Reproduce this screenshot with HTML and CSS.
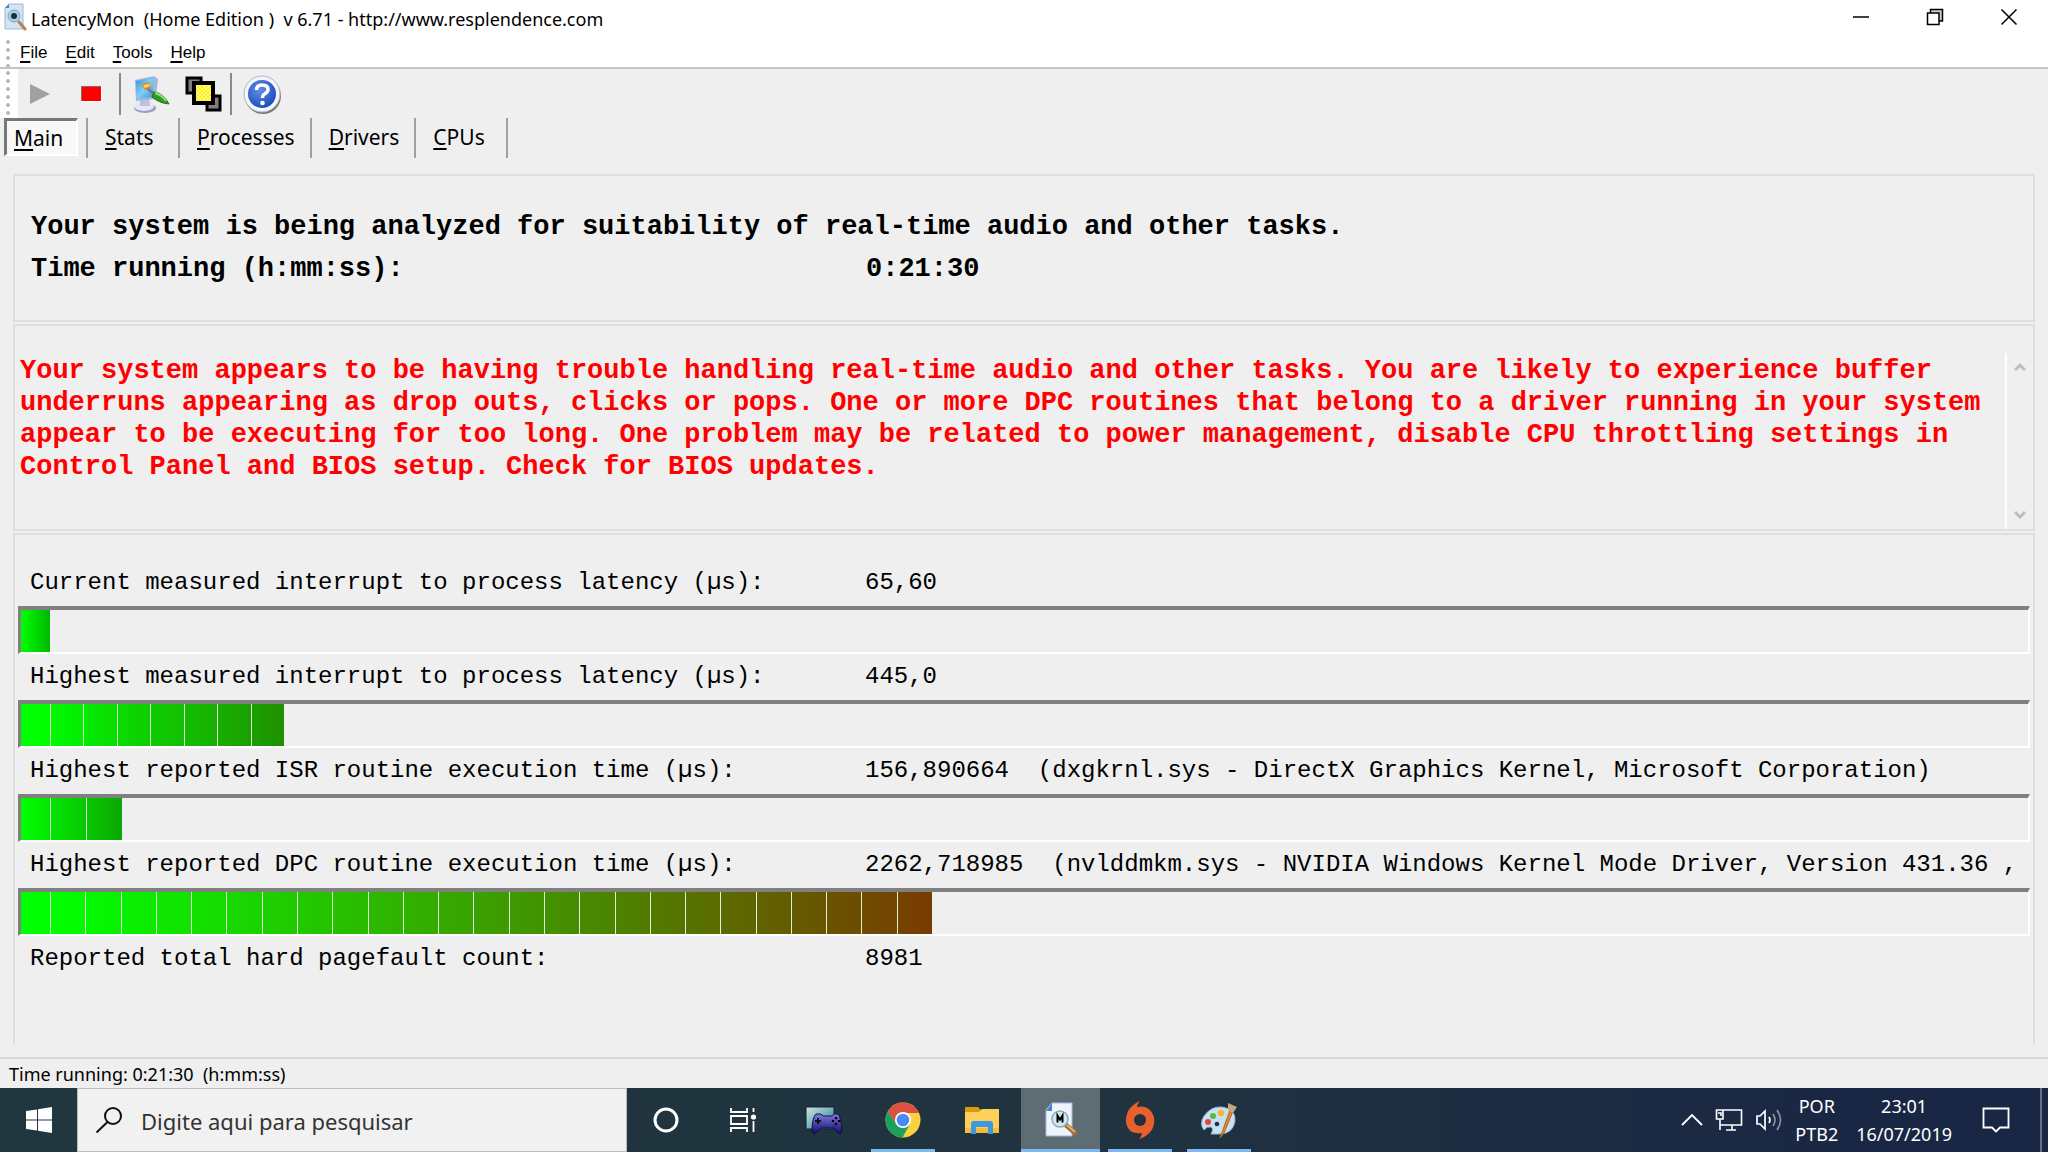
FILE: index.html
```html
<!DOCTYPE html>
<html lang="en">
<head>
<meta charset="utf-8">
<title>LatencyMon</title>
<link rel="stylesheet" href="styles.css">
</head>
<body>
<div class="window">
  <header class="titlebar">
    <svg class="app-icon" viewBox="0 0 24 30" width="24" height="30">
      <path d="M6 2H20V27H2V6Z" fill="#d3e4f6" stroke="#9db8d6"/>
      <path d="M2 6L6 2V6Z" fill="#4b86c4"/>
      <circle cx="11" cy="14" r="6" fill="#a8cfe6" stroke="#8ba5b8"/>
      <circle cx="11" cy="14" r="3" fill="#14303c"/>
      <path d="M16 20L22 27" stroke="#b98255" stroke-width="3" stroke-linecap="round"/>
    </svg>
    <h1 class="title">LatencyMon&nbsp; (Home Edition )&nbsp; v 6.71 - http://www.resplendence.com</h1>
    <div class="window-buttons">
      <button class="window-button" aria-label="Minimize"><svg viewBox="0 0 18 18" width="18" height="18"><path d="M1 9H17" stroke="#000" stroke-width="1.5"/></svg></button>
      <button class="window-button" aria-label="Restore"><svg viewBox="0 0 18 18" width="18" height="18"><path d="M4.5 1.5H16.500V13H4.500Z" fill="#ccc" stroke="#000" stroke-width="1.5"/><path d="M1.500 5H13V16.500H1.500Z" fill="#fff" stroke="#000" stroke-width="1.5"/></svg></button>
      <button class="window-button" aria-label="Close"><svg viewBox="0 0 18 18" width="18" height="18"><path d="M1.500 1.500L16.500 16.500M16.500 1.500L1.500 16.500" stroke="#000" stroke-width="1.5"/></svg></button>
    </div>
  </header>

  <nav class="menubar" aria-label="Menu">
    <span class="grip"></span>
    <button class="menu"><u>F</u>ile</button>
    <button class="menu"><u>E</u>dit</button>
    <button class="menu"><u>T</u>ools</button>
    <button class="menu"><u>H</u>elp</button>
  </nav>

  <div class="toolbar" role="toolbar">
    <span class="grip"></span>
    <button class="tool" aria-label="Start" disabled><svg viewBox="0 0 40 40" width="40" height="40"><path d="M10 10V30L30 20Z" fill="#a0a0a0"/></svg></button>
    <button class="tool" aria-label="Stop"><svg viewBox="0 0 40 40" width="40" height="40"><path d="M10 13H30V28H10Z" fill="#fff"/><path d="M9 12H29V27H9Z" fill="#8c6b6b"/><path d="M10 13H29V27H10Z" fill="#f00"/></svg></button>
    <span class="divider"></span>
    <button class="tool" aria-label="Options">
      <svg viewBox="0 0 40 40" width="40" height="40">
        <defs><linearGradient id="screen" x1="0" y1="0" x2="1" y2="1"><stop offset="0" stop-color="#2d8fe0"/><stop offset=".5" stop-color="#7fd0fa"/><stop offset="1" stop-color="#3b90d8"/></linearGradient></defs>
        <ellipse cx="14" cy="34" rx="11" ry="5" fill="#9c9cc0"/>
        <ellipse cx="13" cy="32" rx="10" ry="5" fill="#e6e6f8"/>
        <path d="M9 25L18 24L19 32H9Z" fill="#c0c0e0"/>
        <path d="M4 6L23 2L27 5L25 25L5 27Z" fill="#9db8da"/>
        <path d="M5 7L22 4L22 23L6 25Z" fill="url(#screen)"/>
        <path d="M10 10L18 8L20 14L14 16Z" fill="#d98c1c"/><path d="M12 11L18 10L19 12L14 14Z" fill="#ffd27c"/>
        <path d="M17 14L27 20L25 23L16 16Z" fill="#6b7f8f"/>
        <path d="M23 18Q32 19 38 30Q28 29 21 23Z" fill="#2f9a25" stroke="#1f6f1a"/><path d="M24 19Q31 21 35 27" stroke="#8ee06f" stroke-width="2" fill="none"/>
      </svg>
    </button>
    <button class="tool" aria-label="Windows">
      <svg viewBox="0 0 40 40" width="40" height="40">
        <defs><pattern id="dither" width="4" height="4" patternUnits="userSpaceOnUse"><path d="M0 0H4V4H0Z" fill="#fff200"/><path d="M0 0H2V2H0ZM2 2H4V4H2Z" fill="#fff799"/></pattern></defs>
        <path d="M4 4H18V19H4Z" fill="#808080" stroke="#000" stroke-width="3"/>
        <path d="M24 22H37V36H24Z" fill="#808080" stroke="#000" stroke-width="3"/>
        <path d="M11 9H30V29H11Z" fill="url(#dither)" stroke="#000" stroke-width="4"/>
      </svg>
    </button>
    <span class="divider"></span>
    <button class="tool" aria-label="Help topics">
      <svg viewBox="0 0 40 40" width="40" height="40">
        <defs><radialGradient id="help" cx=".4" cy=".35" r=".7"><stop offset="0" stop-color="#5f8fe8"/><stop offset="1" stop-color="#1d49b8"/></radialGradient></defs>
        <circle cx="21" cy="22" r="18" fill="#777"/><circle cx="20" cy="20" r="18" fill="#f4f6fb" stroke="#aab4c8"/>
        <circle cx="20" cy="20" r="14" fill="url(#help)"/>
        <path d="M14.500 16Q14.500 11 20 11Q26 11 26 15.500Q26 18 22.500 20Q20.500 21 20.500 24" fill="none" stroke="#fff" stroke-width="3.500"/>
        <circle cx="20.500" cy="29" r="2.300" fill="#fff"/>
      </svg>
    </button>
  </div>

  <nav class="tabs" role="tablist">
    <button class="tab tab-active" role="tab" aria-selected="true"><u>M</u>ain</button>
    <span class="tab-edge"></span>
    <button class="tab" role="tab"><u>S</u>tats</button>
    <button class="tab" role="tab"><u>P</u>rocesses</button>
    <button class="tab" role="tab"><u>D</u>rivers</button>
    <button class="tab" role="tab"><u>C</u>PUs</button>
  </nav>

  <main class="panels">
    <section class="panel summary">
      <p>Your system is being analyzed for suitability of real-time audio and other tasks.</p>
      <p class="pair"><span>Time running (h:mm:ss):</span><span>0:21:30</span></p>
    </section>

    <section class="panel report">
      <textarea class="report-text" readonly aria-label="Conclusion">Your system appears to be having trouble handling real-time audio and other tasks. You are likely to experience buffer underruns appearing as drop outs, clicks or pops. One or more DPC routines that belong to a driver running in your system appear to be executing for too long. One problem may be related to power management, disable CPU throttling settings in Control Panel and BIOS setup. Check for BIOS updates.</textarea>
      <div class="scrollbar">
        <button class="scroll-button" aria-label="Scroll up"><svg viewBox="0 0 12 10" width="12" height="10"><path d="M1 8L6 3L11 8" fill="none" stroke="#bdbdbd" stroke-width="3"/></svg></button>
        <button class="scroll-button" aria-label="Scroll down"><svg viewBox="0 0 12 10" width="12" height="10"><path d="M1 2L6 7L11 2" fill="none" stroke="#bdbdbd" stroke-width="3"/></svg></button>
      </div>
    </section>

    <section class="panel measures">
      <p class="pair measure"><span>Current measured interrupt to process latency (µs):</span><span>65,60</span></p>
      <div class="bar"><div class="fill fill-current" style="width:1.45%"><i></i></div></div>
      <p class="pair measure"><span>Highest measured interrupt to process latency (µs):</span><span>445,0</span></p>
      <div class="bar"><div class="fill fill-highest" style="width:13.1%"><i></i><i></i><i></i><i></i><i></i><i></i><i></i><i></i></div></div>
      <p class="pair measure"><span>Highest reported ISR routine execution time (µs):</span><span>156,890664&nbsp; (dxgkrnl.sys - DirectX Graphics Kernel, Microsoft Corporation)</span></p>
      <div class="bar"><div class="fill fill-isr" style="width:5.05%"><i></i><i></i><i></i></div></div>
      <p class="pair measure"><span>Highest reported DPC routine execution time (µs):</span><span>2262,718985&nbsp; (nvlddmkm.sys - NVIDIA Windows Kernel Mode Driver, Version 431.36 ,</span></p>
      <div class="bar"><div class="fill fill-dpc" style="width:45.4%"><i></i><i></i><i></i><i></i><i></i><i></i><i></i><i></i><i></i><i></i><i></i><i></i><i></i><i></i><i></i><i></i><i></i><i></i><i></i><i></i><i></i><i></i><i></i><i></i><i></i><i></i></div></div>
      <p class="pair measure"><span>Reported total hard pagefault count:</span><span>8981</span></p>
    </section>
  </main>

  <footer class="statusbar">Time running: 0:21:30&nbsp; (h:mm:ss)</footer>
</div>

<div class="taskbar">
  <button class="start" aria-label="Start menu"><svg viewBox="0 0 28 28" width="28" height="28"><path d="M1 5L12 3.500V13.500H1ZM13 3.300L27 1V13.500H13ZM1 14.500H12V24.500L1 23ZM13 14.500H27V27L13 24.700Z" fill="#fff"/></svg></button>
  <label class="search">
    <svg viewBox="0 0 28 28" width="28" height="28"><circle cx="18" cy="10" r="8" fill="none" stroke="#111" stroke-width="2"/><path d="M12.500 16L1.500 26.500" stroke="#111" stroke-width="2"/></svg>
    <input class="search-input" type="text" placeholder="Digite aqui para pesquisar" aria-label="Search">
  </label>
  <div class="shell-buttons">
    <button class="shell" aria-label="Cortana"><svg viewBox="0 0 28 28" width="28" height="28"><circle cx="14" cy="14" r="11" fill="none" stroke="#fff" stroke-width="3"/></svg></button>
    <button class="shell" aria-label="Task view"><svg viewBox="0 0 28 28" width="28" height="28"><path d="M2 2V6H18V2M2 26V22H18V26M2 10H18V18H2ZM24.500 2V6M24.500 15V26" fill="none" stroke="#fff" stroke-width="1.800"/><circle cx="24.500" cy="11" r="2.600" fill="#fff"/></svg></button>
  </div>
  <div class="apps">
    <button class="app" aria-label="Game controller">
      <svg viewBox="0 0 40 40" width="40" height="40">
        <defs><linearGradient id="tv" x1="0" y1="0" x2="1" y2="1"><stop offset="0" stop-color="#d5e4e4"/><stop offset="1" stop-color="#17808a"/></linearGradient><linearGradient id="pad" x1="0" y1="0" x2="0" y2="1"><stop offset="0" stop-color="#7d7de0"/><stop offset="1" stop-color="#14056e"/></linearGradient></defs>
        <path d="M2 7H30V29H2Z" fill="url(#tv)" stroke="#123"/>
        <path d="M12 14H17L19 16H28L30 14H34Q37 17 38 31Q37 36 33 32L30 28H17L13 32Q9 36 8 31Q8 18 12 14Z" fill="url(#pad)" stroke="#10104a"/>
        <path d="M14 18V24M11 21H17" stroke="#111" stroke-width="2"/><circle cx="32" cy="18" r="1.300"/><circle cx="32" cy="24" r="1.300"/><circle cx="29" cy="21" r="1.300"/><circle cx="35" cy="21" r="1.300"/>
      </svg>
    </button>
    <button class="app app-running" aria-label="Chrome">
      <svg viewBox="0 0 36 36" width="36" height="36">
        <circle cx="18" cy="18" r="17.500" fill="#fdd03f"/>
        <path d="M3 9A17.500 17.500 0 0 1 33.200 9.500L34 11H18L11 22Z" fill="#dd4f43"/>
        <path d="M3 9A17.500 17.500 0 0 0 17.500 35.500L25 22L18 26L11 22Z" fill="#1da05f"/>
        <circle cx="18" cy="18" r="8" fill="#fff"/><circle cx="18" cy="18" r="6.300" fill="#4a8af4"/>
      </svg>
    </button>
    <button class="app" aria-label="File Explorer">
      <svg viewBox="0 0 36 36" width="36" height="36">
        <path d="M1 5H14L17 8H30V12H1Z" fill="#d99b0c"/><path d="M1 10H15L18 7H35V31H1Z" fill="#fcd05a"/><path d="M1 26H35V31H1Z" fill="#f5bb3a"/>
        <path d="M7 32V22Q7 19 10 19H26Q29 19 29 22V32H24V25H12V32Z" fill="#3b99dd"/>
      </svg>
    </button>
    <button class="app app-running app-active" aria-label="LatencyMon">
      <svg viewBox="0 0 36 36" width="36" height="36">
        <path d="M9 1H29V34H3V8Z" fill="#eef4fc" stroke="#a9b8e0"/><path d="M3 9L9 1V9Z" fill="#3f83cf"/>
        <path d="M23 23L32 31" stroke="#a06a3e" stroke-width="5" stroke-linecap="round"/><path d="M24 23L32 30" stroke="#f2b25c" stroke-width="2"/>
        <circle cx="17" cy="17" r="8" fill="#cfeaf4" stroke="#8fa9b8" stroke-width="1.500"/>
        <path d="M14.500 20.500V13.500L17 17.500L19.500 13.500V20.500" fill="none" stroke="#000" stroke-width="2"/>
      </svg>
    </button>
    <button class="app app-running" aria-label="Origin">
      <svg viewBox="0 0 40 40" width="40" height="40">
        <path d="M20 1Q17 4 17 7Q30 4 34 17Q36 30 24 37L19 39Q22 36 22 33Q8 35 6 22Q5 8 20 1Z" fill="#e9602f"/><circle cx="20" cy="20" r="6" fill="#20313d"/>
      </svg>
    </button>
    <button class="app app-running" aria-label="Paint">
      <svg viewBox="0 0 40 40" width="40" height="40">
        <path d="M23 7Q37 9 36 21Q34 34 20 34L12 34Q15 29 12 27Q8 26 5 30Q0 24 5 16Q12 6 23 7Z" fill="#c5e2f2" stroke="#8fb4cc"/>
        <circle cx="9" cy="22" r="3" fill="#e0463a"/><circle cx="14" cy="16" r="3" fill="#58b94b"/><circle cx="22" cy="13" r="3.200" fill="#f8b62a"/><circle cx="18" cy="24" r="2.300" fill="#20313d"/>
        <path d="M31 10L21 38L25 33L34 11Z" fill="#e8872b" stroke="#b8641a"/>
        <path d="M29 3L38 7L34 13L29 10Z" fill="#c6a67e"/>
      </svg>
    </button>
  </div>
  <div class="tray">
    <svg viewBox="0 0 22 14" width="22" height="14"><path d="M1 12L11 2L21 12" fill="none" stroke="#fff" stroke-width="1.800"/></svg>
    <svg viewBox="0 0 28 24" width="28" height="24"><path d="M8 2H26.500V17H5M17 17V22M11 22H21M5 11V22M1.500 2H8V11H1.500ZM3 5H6V8" fill="none" stroke="#fff" stroke-width="1.600"/></svg>
    <svg viewBox="0 0 28 24" width="28" height="24"><path d="M2 8H5L10 3V21L5 16H2Z" fill="none" stroke="#fff" stroke-width="1.700"/><path d="M14 9Q16 12 14 15" fill="none" stroke="#fff" stroke-width="1.700"/><path d="M18 6Q22 12 18 18M22 2Q29 12 22 22" fill="none" stroke="#8791a0" stroke-width="1.700"/></svg>
    <div class="tray-text language"><span>POR</span><span>PTB2</span></div>
    <div class="tray-text clock"><span>23:01</span><span>16/07/2019</span></div>
    <button class="notifications" aria-label="Notifications"><svg viewBox="0 0 28 28" width="28" height="28"><path d="M1.500 2.500H26.500V21.500H18L14 25.500L10 21.500H1.500Z" fill="none" stroke="#fff" stroke-width="1.800"/></svg></button>
  </div>
</div>
</body>
</html>
```
FILE: styles.css
```css
* {
  box-sizing: border-box;
}

body {
  margin: 0;
  min-height: 100vh;
  display: flex;
  flex-direction: column;
  background: #efefef;
  color: #000;
  font-family: "Noto Sans", sans-serif;
}

button {
  margin: 0;
  padding: 0;
  border: 0;
  background: none;
  color: inherit;
  font: inherit;
}

svg {
  display: block;
  flex: none;
}

p, h1 {
  margin: 0;
}

.window {
  flex: 1;
  display: flex;
  flex-direction: column;
}

/* Title bar */
.titlebar {
  display: flex;
  align-items: center;
  height: 38px;
  padding: 0 2px 4px 3px;
  gap: 4px;
  background: #fff;
}

.title {
  flex: 1;
  padding-top: 4px;
  font-size: 18px;
  font-weight: 400;
  line-height: 24px;
}

.window-buttons {
  display: flex;
}

.window-button {
  width: 74px;
  height: 34px;
  display: grid;
  place-items: center;
}

/* Menu */
.menubar {
  display: flex;
  height: 31px;
  align-items: center;
  gap: 18px;
  background: #fff;
  border-bottom: 2px solid #c3c3c3;
  font-family: "Liberation Sans", sans-serif;
  font-size: 17px;
}

.grip {
  align-self: stretch;
  width: 18px;
  margin-right: -16px;
  background: radial-gradient(circle at 8px 4px, #bbb 2px, #fff 2px) 0 0 / 18px 8px;
}

u {
  text-underline-offset: 3px;
  text-decoration-thickness: 2px;
}

/* Toolbar */
.toolbar {
  display: flex;
  height: 49px;
  align-items: center;
}

.toolbar .grip {
  margin-right: -4px;
}

.tool {
  width: 52px;
  height: 42px;
  display: grid;
  place-items: center;
}

.divider {
  width: 2px;
  height: 42px;
  margin: 0 4px 0 1px;
  background: #8a8a8a;
}

/* Tabs */
.tabs {
  display: flex;
  height: 40px;
  padding-left: 4px;
  font-size: 21px;
}

.tab {
  min-width: 92px;
  padding: 0 15px 2px 17px;
  border-right: 2px solid #a0a0a0;
  text-align: left;
  line-height: 30px;
}

.tab-active {
  min-width: 74px;
  height: 38px;
  padding: 0 9px 0 7px;
  border: 2px solid #fff;
  border-top: 3px solid #777;
  border-left: 3px solid #777;
  background: #f8f8f8;
}

.tab-edge {
  width: 10px;
  border-right: 2px solid #a0a0a0;
}

/* Panels */
.panels {
  flex: 1;
  display: flex;
  flex-direction: column;
  gap: 2px;
  padding: 16px 13px 12px;
  font-family: "Liberation Mono", monospace;
}

.panel {
  border: 2px solid #dedede;
}

.pair {
  display: grid;
  grid-template-columns: 835px 1fr;
  white-space: nowrap;
}

.summary {
  height: 148px;
  padding: 30px 16px 0;
  font-size: 27px;
  font-weight: 700;
  line-height: 42px;
}

.report {
  display: flex;
  height: 207px;
  padding: 27px 0 0 5px;
}

.report-text {
  flex: 1;
  padding: 2px 0 0;
  border: 0;
  outline: 0;
  resize: none;
  overflow: hidden;
  background: none;
  color: #f00;
  font: 700 27px/32px "Liberation Mono", monospace;
}

.scrollbar {
  display: flex;
  flex-direction: column;
  justify-content: space-between;
  width: 28px;
  border-left: 2px solid #fff;
}

.scroll-button {
  height: 28px;
  display: grid;
  place-items: center;
}

.measures {
  flex: 1;
  padding: 25px 3px 0;
  border-bottom: 0;
  font-size: 24px;
}

.measure {
  height: 46px;
  padding-left: 12px;
  line-height: 46px;
  overflow: hidden;
}

.bar {
  height: 48px;
  border: 2px solid #fff;
  border-top: 4px solid #808080;
  border-left: 3px solid #808080;
}

.fill {
  display: flex;
  height: 100%;
}

.fill i {
  flex: 1;
  border-right: 1px solid #dff0d8;
}

.fill i:first-child {
  flex: 0 0 30px;
}

.fill i:last-child {
  border-right: 0;
}

.fill-current {
  background: linear-gradient(90deg, #00ff00, #00b800);
}

.fill-highest {
  background: linear-gradient(90deg, #00ff00 8%, #1f9000);
}

.fill-isr {
  background: linear-gradient(90deg, #00ff00, #0aa800);
}

.fill-dpc {
  background: linear-gradient(90deg, #00ff00 4%, #783c00);
}

/* Status bar */
.statusbar {
  height: 31px;
  padding-left: 9px;
  border-top: 2px solid #d9d9d9;
  font-size: 18px;
  line-height: 30px;
}

/* Taskbar */
.taskbar {
  display: flex;
  height: 64px;
  background: linear-gradient(90deg, #21373f 0%, #20333f 55%, #1a2744 90%);
  color: #fff;
}

.start {
  width: 77px;
  display: grid;
  place-items: center;
}

.search {
  display: flex;
  align-items: center;
  gap: 18px;
  width: 550px;
  padding-left: 17px;
  border: 1px solid #bbb;
  background: #f1f1f1;
}

.search-input {
  flex: 1;
  min-width: 0;
  padding: 2px 0 0;
  border: 0;
  outline: 0;
  background: none;
  font: 22px "Noto Sans", sans-serif;
}

.search-input::placeholder {
  color: #333;
}

.shell-buttons, .apps {
  display: flex;
}

.apps {
  margin-left: 3px;
}

.shell {
  width: 77px;
  display: grid;
  place-items: center;
}

.app {
  width: 79px;
  display: grid;
  place-items: center;
  background: linear-gradient(#7abaf0, #7abaf0) center bottom / 0 3px no-repeat;
}

.app-running {
  background-size: 64px 3px;
}

.app-active {
  background-color: #5e6c74;
  background-size: 100% 3px;
}

.tray {
  display: flex;
  align-items: center;
  gap: 12px;
  margin-left: auto;
  margin-right: 6px;
  padding-right: 30px;
  border-right: 2px solid #66708a;
}

.tray-text {
  display: flex;
  flex-direction: column;
  text-align: center;
  font-size: 18px;
  line-height: 28px;
}

.clock {
  margin: 0 18px 0 6px;
}
```
